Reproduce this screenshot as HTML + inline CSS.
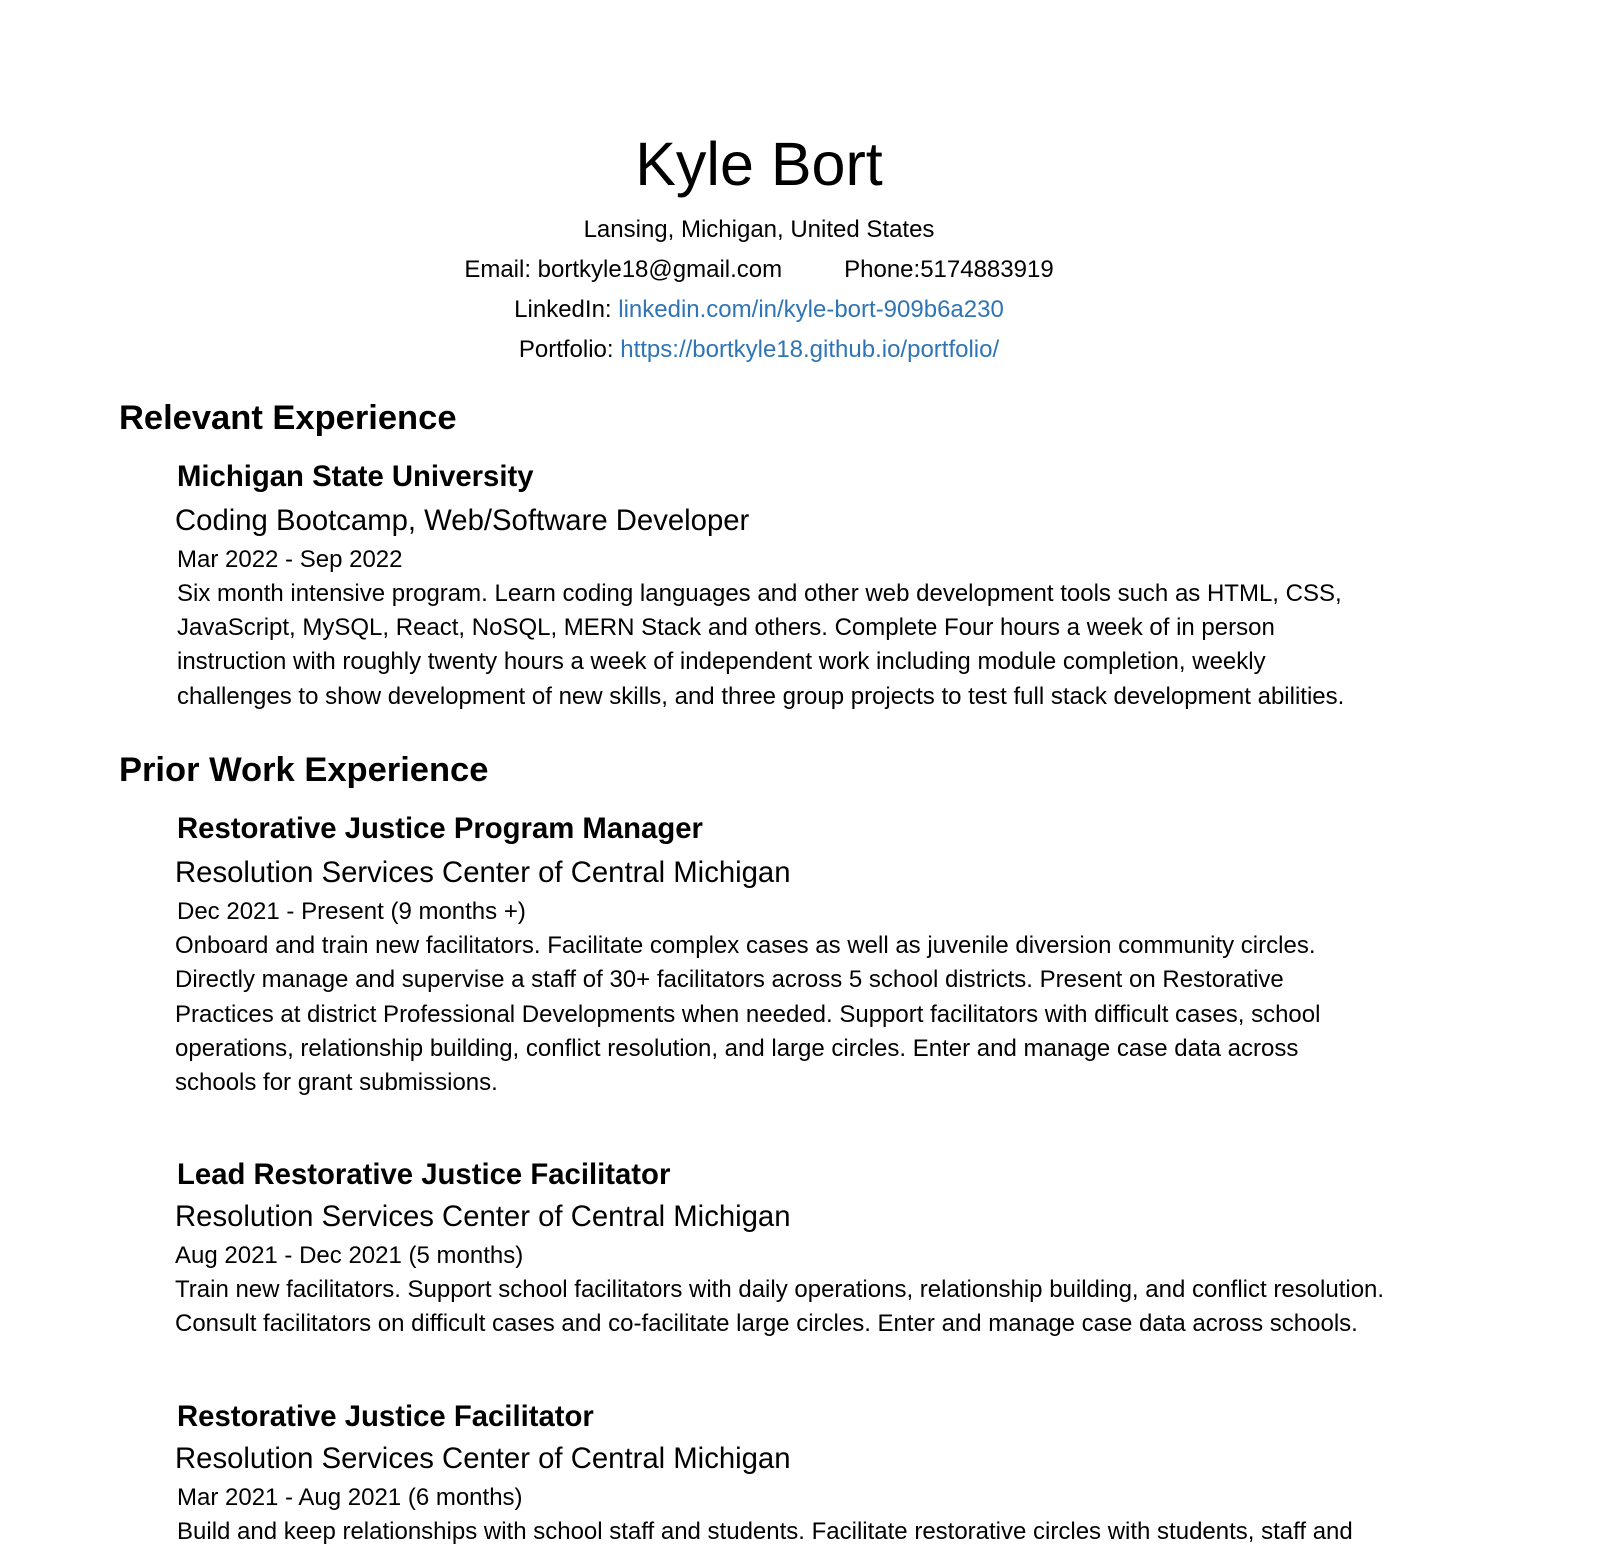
<!DOCTYPE html>
<html><head><meta charset="utf-8"><style>
body{margin:0;width:1614px;height:1522px;overflow:hidden;background:#fff;font-family:"Liberation Sans",Arial,sans-serif;color:#000;position:relative}
.l{position:absolute;white-space:nowrap;height:40px;line-height:40px}
.c{left:0;width:1518px;text-align:center}
.n{font-size:24px}
.h{font-size:34.5px;font-weight:bold;left:119px}
.co{font-size:29.3px;font-weight:bold;left:177px}
.s{font-size:29.3px;left:175px}
a{color:#2f75b5;text-decoration:none}
</style></head><body>
<div class="l c" style="top:146px;font-size:61px"><span style="position:relative;top:-2px">Kyle Bort</span></div>
<div class="l c n" style="top:210px">Lansing, Michigan, United States</div>
<div class="l c n" style="top:250px">Email: bortkyle18@gmail.com<span style="display:inline-block;width:62px"></span>Phone:5174883919</div>
<div class="l c n" style="top:290px">LinkedIn: <a>linkedin.com/in/kyle-bort-909b6a230</a></div>
<div class="l c n" style="top:330px">Portfolio: <a>https://bortkyle18.github.io/portfolio/</a></div>

<div class="l h" style="top:398px">Relevant Experience</div>
<div class="l co" style="top:457px">Michigan State University</div>
<div class="l s" style="top:501px">Coding Bootcamp, Web/Software Developer</div>
<div class="l n" style="left:177px;top:540px">Mar 2022 - Sep 2022</div>
<div class="l n" style="left:177px;top:574px">Six month intensive program. Learn coding languages and other web development tools such as HTML, CSS,</div>
<div class="l n" style="left:177px;top:608px">JavaScript, MySQL, React, NoSQL, MERN Stack and others. Complete Four hours a week of in person</div>
<div class="l n" style="left:177px;top:642px">instruction with roughly twenty hours a week of independent work including module completion, weekly</div>
<div class="l n" style="left:177px;top:677px">challenges to show development of new skills, and three group projects to test full stack development abilities.</div>

<div class="l h" style="top:750px">Prior Work Experience</div>
<div class="l co" style="top:809px">Restorative Justice Program Manager</div>
<div class="l s" style="top:853px">Resolution Services Center of Central Michigan</div>
<div class="l n" style="left:177px;top:892px">Dec 2021 - Present (9 months +)</div>
<div class="l n" style="left:175px;top:926px">Onboard and train new facilitators. Facilitate complex cases as well as juvenile diversion community circles.</div>
<div class="l n" style="left:175px;top:960px">Directly manage and supervise a staff of 30+ facilitators across 5 school districts. Present on Restorative</div>
<div class="l n" style="left:175px;top:995px">Practices at district Professional Developments when needed. Support facilitators with difficult cases, school</div>
<div class="l n" style="left:175px;top:1029px">operations, relationship building, conflict resolution, and large circles. Enter and manage case data across</div>
<div class="l n" style="left:175px;top:1063px">schools for grant submissions.</div>

<div class="l co" style="top:1155px">Lead Restorative Justice Facilitator</div>
<div class="l s" style="top:1197px">Resolution Services Center of Central Michigan</div>
<div class="l n" style="left:175px;top:1236px">Aug 2021 - Dec 2021 (5 months)</div>
<div class="l n" style="left:175px;top:1270px">Train new facilitators. Support school facilitators with daily operations, relationship building, and conflict resolution.</div>
<div class="l n" style="left:175px;top:1304px">Consult facilitators on difficult cases and co-facilitate large circles. Enter and manage case data across schools.</div>

<div class="l co" style="top:1397px">Restorative Justice Facilitator</div>
<div class="l s" style="top:1439px">Resolution Services Center of Central Michigan</div>
<div class="l n" style="left:177px;top:1478px">Mar 2021 - Aug 2021 (6 months)</div>
<div class="l n" style="left:177px;top:1512px">Build and keep relationships with school staff and students. Facilitate restorative circles with students, staff and</div>
</body></html>
